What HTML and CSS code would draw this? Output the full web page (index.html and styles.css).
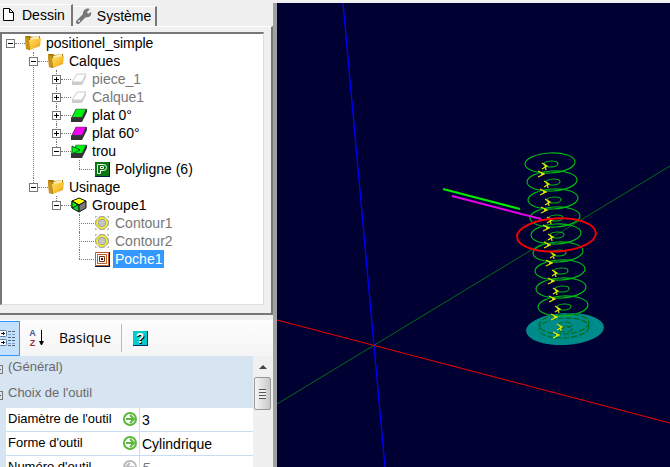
FILE: index.html
```html
<!DOCTYPE html>
<html lang="fr">
<head>
<meta charset="utf-8">
<title>positionel_simple</title>
<link rel="stylesheet" href="styles.css">
</head>
<body>
<svg class="defs" aria-hidden="true">
  <defs>
    <linearGradient id="gold" x1="0" y1="0" x2="1" y2="1"><stop offset="0" stop-color="#ffe070"/><stop offset=".6" stop-color="#f6bd2c"/><stop offset="1" stop-color="#d48d08"/></linearGradient>
    <symbol id="folder" viewBox="0 0 16 16"><path d="M0 1h5l2 1 8-1v3l-10 11-4-1z" fill="#a97808"/><path d="M5 3l9-2v3l-8 2z" fill="#fff4b8"/><path d="M4 5l12-2-1 8-10 4z" fill="url(#gold)"/><path d="M0 1l4 3v11l-3-2z" fill="#c99416"/></symbol>
    <symbol id="layer" viewBox="0 0 16 16"><path d="M0 11L5 2h11v3l-5 10H0z" fill="#333"/><path d="M1 10L5 2h10l-4 8z" fill="currentColor"/><path d="M1 11L5 2h10l-4 9z" stroke="#444" fill="none" stroke-width=".5"/></symbol>
    <symbol id="layer-off" viewBox="0 0 16 16"><path d="M1 11L6 3h9l-4 8z" fill="#fff" stroke="#ccc"/><path d="M1 11h10l4-7v2l-4 8H1z" fill="#ccc"/></symbol>
    <symbol id="contour" viewBox="0 0 16 16"><path d="M1 1h14v14H1z" fill="#bbb"/><path d="M1 5l4-4M11 1l4 4M15 11l-4 4M5 15l-4-4" stroke="#fff" stroke-width="2"/><circle cx="8" cy="8" r="5" fill="#c4c4c4" stroke="#888" stroke-width="3"/><circle cx="8" cy="8" r="5" fill="none" stroke="#f1ed38" stroke-width="2"/></symbol>
    <symbol id="arrow" viewBox="0 0 16 16"><circle cx="8" cy="8" r="6" fill="#fff" stroke="currentColor" stroke-width="2"/><path d="M4 8h7M8 4l4 4-4 4" fill="none" stroke="currentColor" stroke-width="2"/></symbol>
    <g id="ring"><ellipse cx="550" cy="163" rx="25" ry="10" transform="rotate(-3 550 163)"/><ellipse cx="551" cy="164" rx="7" ry="3" transform="rotate(-3 551 164)"/></g>
    <g id="ticks"><path d="M542 163l5 3-5 3M545 165l1 5M538 171l6 3-6 3M541 174h4"/></g>
  </defs>
</svg>
<main class="app">
  <aside class="side">
    <div class="tabs" role="tablist">
      <button class="tab tab-active" role="tab" aria-selected="true"><svg class="doc" viewBox="0 0 11 13"><path d="M.5 .5h6l4 4v8H.5zM6.500 .5v4h4" fill="#fff" stroke="#000"/></svg>Dessin</button>
      <button class="tab" role="tab" aria-selected="false"><svg class="icon" viewBox="0 0 16 16"><path d="M2 14l7-7" stroke="#777" stroke-width="4" stroke-linecap="round"/><path d="M14 1l-3 3 1 2 3-2c1 4-2 6-6 5L7 7C6 3 10-1 14 1z" fill="#777"/><circle cx="3" cy="13" r="1" fill="#eee"/></svg>Système</button>
    </div>
    <section class="page">
      <ul class="tree">
        <li>
          <div class="row"><button class="toggle" aria-label="Réduire"></button><i class="link"></i><svg class="icon"><use href="#folder"/></svg><span class="label">positionel_simple</span></div>
          <ul>
            <li>
              <div class="row"><button class="toggle" aria-label="Réduire"></button><i class="link"></i><svg class="icon"><use href="#folder"/></svg><span class="label">Calques</span></div>
              <ul>
                <li><div class="row off"><button class="toggle plus" aria-label="Développer"></button><i class="link"></i><svg class="icon"><use href="#layer-off"/></svg><span class="label">piece_1</span></div></li>
                <li><div class="row off"><button class="toggle plus" aria-label="Développer"></button><i class="link"></i><svg class="icon"><use href="#layer-off"/></svg><span class="label">Calque1</span></div></li>
                <li><div class="row"><button class="toggle plus" aria-label="Développer"></button><i class="link"></i><svg class="icon lime"><use href="#layer"/></svg><span class="label">plat 0°</span></div></li>
                <li><div class="row"><button class="toggle plus" aria-label="Développer"></button><i class="link"></i><svg class="icon magenta"><use href="#layer"/></svg><span class="label">plat 60°</span></div></li>
                <li>
                  <div class="row"><button class="toggle" aria-label="Réduire"></button><i class="link"></i><svg class="icon lime" viewBox="0 0 16 16"><use href="#layer"/><path d="M1 3l8 4-8 4z" fill="#0f0" stroke="#053"/></svg><span class="label">trou</span></div>
                  <ul>
                    <li><div class="row"><i class="link leaf"></i><svg class="icon" viewBox="0 0 16 16"><path d="M1 1h15v15H1z" fill="#00204a"/><path d="M1 1h14v14H1z" fill="#087510"/><path d="M3.500 12.500v-9h6q3 0 3 3t-3 3h-3v3zM6.500 5.500v2h3v-2z" fill="#087510" stroke="#fff"/></svg><span class="label">Polyligne (6)</span></div></li>
                  </ul>
                </li>
              </ul>
            </li>
            <li>
              <div class="row"><button class="toggle" aria-label="Réduire"></button><i class="link"></i><svg class="icon"><use href="#folder"/></svg><span class="label">Usinage</span></div>
              <ul>
                <li>
                  <div class="row"><button class="toggle" aria-label="Réduire"></button><i class="link"></i><svg class="icon" viewBox="0 0 16 16"><g stroke="#111" stroke-linejoin="round"><path d="M1 4l7-3 7 3-7 4z" fill="#ff0"/><path d="M1 4l7 4v7l-7-4z" fill="#0d2"/><path d="M15 4L8 8v7l7-4z" fill="#777"/><path d="M1 4l6 4-6 3z" fill="#0f0"/></g></svg><span class="label">Groupe1</span></div>
                  <ul>
                    <li><div class="row off"><i class="link leaf"></i><svg class="icon"><use href="#contour"/></svg><span class="label">Contour1</span></div></li>
                    <li><div class="row off"><i class="link leaf"></i><svg class="icon"><use href="#contour"/></svg><span class="label">Contour2</span></div></li>
                    <li><div class="row"><i class="link leaf"></i><svg class="icon" viewBox="0 0 16 16"><path d="M1 1h15v15H1z" fill="#001540"/><path d="M1 1h14v14H1z" fill="#fff"/><g fill="none"><path d="M1.500 1.500h13v13h-13z" stroke="#c05a22"/><path d="M3.500 3.500h9v9h-9z" stroke="#c05a22"/><path d="M5.500 5.500h5v5h-5z" stroke="#743010"/></g><path d="M7 7h2v2H7z" fill="#222"/></svg><span class="label selected">Poche1</span></div></li>
                  </ul>
                </li>
              </ul>
            </li>
          </ul>
        </li>
      </ul>
    </section>
    <div class="toolbar" role="toolbar">
      <button class="tool pressed" aria-label="Par catégorie"><svg viewBox="0 0 16 18"><g fill="#fff" stroke="#5878a0"><rect x="-.5" y="1.500" width="7" height="6" rx="1"/><rect x="-.5" y="10.500" width="7" height="6" rx="1"/></g><path d="M1 4.500h4M3.500 3v3M1 13.500h4M3.500 12v3" stroke="#112"/><path d="M8 2.500h8M8 8.500h8M8 11.500h8M8 16.500h8" stroke="#53657c" stroke-dasharray="3 1"/><path d="M8 5.500h8M8 14.500h8" stroke="#7b9ed0" stroke-dasharray="3 1"/></svg></button>
      <button class="tool sort" aria-label="Alphabétique"><span class="az"><b>A</b><b>Z</b></span><svg viewBox="0 0 5 16"><path d="M2 0h1v11h2l-2 4H2l-2-4h2z"/></svg></button>
      <button class="tool basic">Basique</button>
      <button class="tool help" aria-label="Aide"><span>?</span></button>
    </div>
    <section class="props">
      <div class="grid">
        <table>
          <colgroup><col class="gutter"><col class="names"><col></colgroup>
          <tbody>
            <tr class="cat"><th colspan="3"><button class="fold" aria-label="Réduire"></button>(Général)</th></tr>
            <tr class="cat"><th colspan="3"><button class="fold" aria-label="Réduire"></button>Choix de l'outil</th></tr>
            <tr><td class="gutter"></td><th scope="row"><div class="name">Diamètre de l'outil<svg class="icon go"><use href="#arrow"/></svg></div></th><td class="value">3</td></tr>
            <tr><td class="gutter"></td><th scope="row"><div class="name">Forme d'outil<svg class="icon go"><use href="#arrow"/></svg></div></th><td class="value">Cylindrique</td></tr>
            <tr><td class="gutter"></td><th scope="row"><div class="name">Numéro d'outil<svg class="icon back"><use href="#arrow"/></svg></div></th><td class="value auto">5</td></tr>
          </tbody>
        </table>
      </div>
      <div class="scroll"><button class="up" aria-label="Défiler vers le haut"></button><div class="thumb"></div></div>
    </section>
  </aside>
  <div class="splitter"></div>
  <section class="view">
    <svg viewBox="277 3 393 464" preserveAspectRatio="xMinYMin slice" role="img" aria-label="Vue 3D" fill="none">
      <path d="M277 404L670 166" stroke="#006c14"/>
      <path d="M343 3l42 464" stroke="#00f" stroke-width="1.300"/>
      <path d="M277 320l393 103" stroke="#f00000"/>
      <ellipse cx="565" cy="329" rx="39" ry="16" transform="rotate(-3 565 329)" fill="#008b8b"/>
      <g stroke="#00b814" stroke-width="1.200">
        <use href="#ring"/><use href="#ring" x="2" y="18"/><use href="#ring" x="3" y="36"/><use href="#ring" x="5" y="54"/><use href="#ring" x="6" y="71"/><use href="#ring" x="8" y="89"/><use href="#ring" x="10" y="107"/><use href="#ring" x="11" y="125"/><use href="#ring" x="13" y="143"/>
      </g>
      <g stroke="#006c18" stroke-width="1.200" stroke-dasharray="6 2"><use href="#ring" x="14" y="161"/><use href="#ring" x="14" y="165"/></g>
      <g stroke="#e8e800" stroke-width="1.200">
        <use href="#ticks"/><use href="#ticks" x="2" y="18"/><use href="#ticks" x="3" y="36"/><use href="#ticks" x="5" y="54"/><use href="#ticks" x="6" y="71"/><use href="#ticks" x="8" y="89"/><use href="#ticks" x="10" y="107"/><use href="#ticks" x="11" y="125"/><use href="#ticks" x="13" y="143"/><use href="#ticks" x="15" y="161"/>
      </g>
      <path d="M443 189l77 20" stroke="#0e0" stroke-width="2"/>
      <path d="M452 196l89 23" stroke="#e800e8" stroke-width="2"/>
      <ellipse cx="556.500" cy="235" rx="39.500" ry="16.500" transform="rotate(-3 556 235)" stroke="#f00000" stroke-width="2"/>
    </svg>
  </section>
</main>
</body>
</html>
```
FILE: styles.css
```css
* { box-sizing: border-box; }
body { margin: 0; background: #f0f0f0; color: #000; font: 14px/18px "Liberation Sans", Arial, sans-serif; }
button { margin: 0; padding: 0; border: 0; background: none; color: inherit; font: inherit; }
ul { margin: 0; padding: 0; list-style: none; }
svg { display: block; flex: none; }
.defs { position: absolute; width: 0; height: 0; }
.icon { width: 16px; height: 16px; }

.app { display: grid; grid-template-columns: 273px 4px minmax(0, 1fr); height: 100vh; padding-top: 3px; overflow: hidden; }
.side { display: flex; flex-direction: column; min-height: 0; overflow: hidden; }
.splitter { background: #a0a0a0; }
.view { background: #000033; min-height: 0; overflow: hidden; }
.view svg { width: 100%; height: 100%; }

.tabs { display: flex; align-items: flex-end; height: 23px; }
.tab { display: flex; align-items: center; gap: 5px; height: 20px; padding: 0 4px 2px 3px; border-top: 1px solid #fff; border-right: 2px solid #777; }
.tab-active { gap: 8px; height: 22px; padding: 0 6px 2px 3px; }
.doc { width: 11px; height: 13px; }

.page { padding: 5px 7px 8px 0; border-top: 1px solid #fff; border-right: 2px solid #777; border-bottom: 2px solid #777; }
.tree { height: 273px; padding: 0 0 0 4px; background: #fff; border: 1px solid #ddd; border-top: 2px solid #777; border-left: 2px solid #777; overflow: hidden; }
.tree ul { padding-left: 23px; }
.tree li { position: relative; }
.tree ul > li::before { content: ""; position: absolute; left: 4px; top: 0; bottom: 0; border-left: 1px dotted #777; }
.tree ul > li:last-child::before { bottom: auto; height: 9px; }
.row { display: flex; align-items: center; height: 18px; white-space: nowrap; }
.toggle { position: relative; width: 9px; height: 9px; border: 1px solid #777; background: linear-gradient(#000, #000) center / 5px 1px no-repeat #fff; }
.plus { background: linear-gradient(#000, #000) center / 5px 1px no-repeat, linear-gradient(#000, #000) center / 1px 5px no-repeat #fff; }
.link { width: 10px; border-top: 1px dotted #777; }
.leaf { width: 15px; margin-left: 4px; }
.label { padding: 0 2px; margin-left: 3px; line-height: 18px; }
.off { color: #777; }
.selected { background: #3399ff; color: #fff; }
.lime { color: #00f010; }
.magenta { color: #f000f0; }

.toolbar { display: flex; align-items: center; height: 36px; margin-top: 5px; background: linear-gradient(#fdfdfd, #f5f5f5); flex: none; }
.tool { display: flex; align-items: center; }
.pressed { width: 20px; height: 35px; border: 1px solid #3399ff; border-left: 0; background: #c4e0fa; }
.pressed svg { width: 16px; height: 18px; }
.sort { gap: 3px; margin-left: 9px; }
.sort svg { width: 5px; height: 16px; }
.az { display: flex; flex-direction: column; width: 7px; font: 9px/10px "Liberation Sans", sans-serif; color: #36599b; }
.az b + b { color: #933; }
.basic { height: 28px; margin-left: 15px; padding-right: 10px; border-right: 1px solid #bbb; font: 14px/20px "Open Sans", sans-serif; }
.help { justify-content: center; width: 15px; height: 15px; margin-left: 11px; background: #00cccc; border-right: 1px solid #003070; border-bottom: 1px solid #003070; color: #fff; font-weight: bold; text-shadow: 1px 1px #000; }

.props { display: flex; flex: 1; min-height: 0; overflow: hidden; }
.grid { flex: 1; min-width: 0; overflow: hidden; background: #fff; }
table { width: 100%; border-spacing: 0; table-layout: fixed; }
th { padding: 0; font-weight: normal; text-align: left; font-size: 13px; }
td { padding: 0; }
tr { height: 24px; }
.cat { height: 26px; background: #d7e4f2; color: #696969; }
.cat th { padding: 0 0 4px 8px; position: relative; }
.fold { position: absolute; left: -6px; top: 9px; width: 9px; height: 9px; border: 1px solid #777; background: linear-gradient(#555, #555) center / 5px 1px no-repeat; }
.gutter { width: 6px; background: #d7e4f2; }
.names { width: 133px; }
tr:not(.cat) th, .value { border-bottom: 1px solid #c6ddf2; }
.name { display: flex; justify-content: space-between; align-items: center; padding: 0 1px 2px 2px; white-space: nowrap; }
.value { padding: 0 0 0 2px; border-left: 1px solid #c6ddf2; }
.go { color: #5bb83b; }
.back { color: #bbb; transform: scaleX(-1); }
.auto { color: #777; font-style: italic; }
.scroll { width: 20px; padding: 0 2px 0 1px; background: #f0f0f0; flex: none; }
.up { display: grid; place-items: center; width: 17px; height: 21px; }
.up::before { content: ""; border: 4px solid transparent; border-top: 0; border-bottom-color: #444; }
.thumb { width: 17px; height: 33px; border: 1px solid #999; border-radius: 2px; background: repeating-linear-gradient(#555 0 1px, #eee 1px 3px) center / 7px 10px no-repeat, linear-gradient(90deg, #f5f5f5, #c8c8c8); }
```
